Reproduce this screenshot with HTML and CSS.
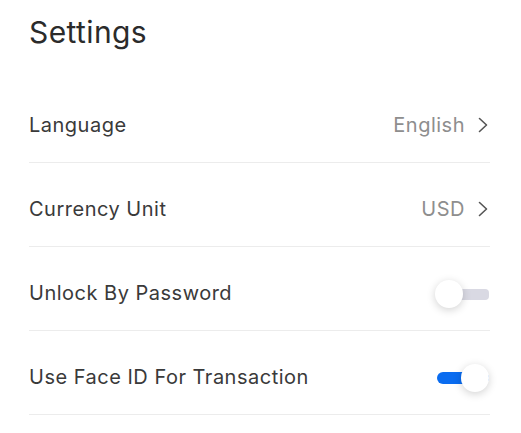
FILE: index.html
```html
<!DOCTYPE html>
<html>
<head>
<meta charset="utf-8">
<link rel="stylesheet" href="styles.css">
</head>
<body>
<div class="page">
  <h1 class="title">Settings</h1>
  <div class="list">
    <div class="row">
      <span class="label">Language</span>
      <span class="value">English<svg class="chev" viewBox="0 0 10 16" width="10" height="16"><path d="M1.5 1.5 L8.5 8 L1.5 14.5" fill="none" stroke="#555" stroke-width="1.6" stroke-linecap="round" stroke-linejoin="round"/></svg></span>
    </div>
    <div class="row">
      <span class="label">Currency Unit</span>
      <span class="value">USD<svg class="chev" viewBox="0 0 10 16" width="10" height="16"><path d="M1.5 1.5 L8.5 8 L1.5 14.5" fill="none" stroke="#555" stroke-width="1.6" stroke-linecap="round" stroke-linejoin="round"/></svg></span>
    </div>
    <div class="row">
      <span class="label">Unlock By Password</span>
      <span class="switch"><span class="track"></span><span class="knob"></span></span>
    </div>
    <div class="row">
      <span class="label">Use Face ID For Transaction</span>
      <span class="switch on"><span class="track"></span><span class="knob"></span></span>
    </div>
  </div>
</div>
</body>
</html>
```
FILE: styles.css
```css
html, body {
  margin: 0;
  padding: 0;
  background: #fff;
}
body {
  font-family: Inter, "Noto Sans", sans-serif;
  color: #333;
}
.page {
  padding: 0 31px 0 29px;
}
.title {
  margin: 0;
  padding-top: 13px;
  height: 79px;
  box-sizing: border-box;
  font-size: 30px;
  font-weight: 400;
  line-height: 38px;
  color: #2b2b2b;
  letter-spacing: 0.4px;
}
.row {
  height: 84px;
  box-sizing: border-box;
  border-bottom: 1px solid #ececec;
  display: flex;
  align-items: center;
  justify-content: space-between;
  padding-top: 9px;
}
.label {
  font-size: 20px;
  color: #3a3a3a;
  letter-spacing: 0.5px;
}
.value {
  display: flex;
  align-items: center;
  gap: 13px;
  font-size: 20px;
  color: #8e8e8e;
  letter-spacing: 0.5px;
  margin-right: 2px;
}
.chev {
  display: block;
}
.switch {
  position: relative;
  width: 54px;
  height: 28px;
  margin-right: 1px;
  margin-top: 2px;
}
.track {
  position: absolute;
  left: 2px;
  right: 0;
  top: 9px;
  height: 11px;
  border-radius: 4px;
  background: #d9d9e3;
}
.knob {
  position: absolute;
  top: 0;
  left: 0;
  width: 28px;
  height: 28px;
  border-radius: 50%;
  background: #fff;
  box-shadow: 0 2px 8px rgba(0,0,0,0.18);
}
.switch.on .track {
  background: #0a6cf0;
  border-radius: 6px;
  height: 12px;
  top: 8px;
}
.switch.on .knob {
  left: 26px;
}
```
